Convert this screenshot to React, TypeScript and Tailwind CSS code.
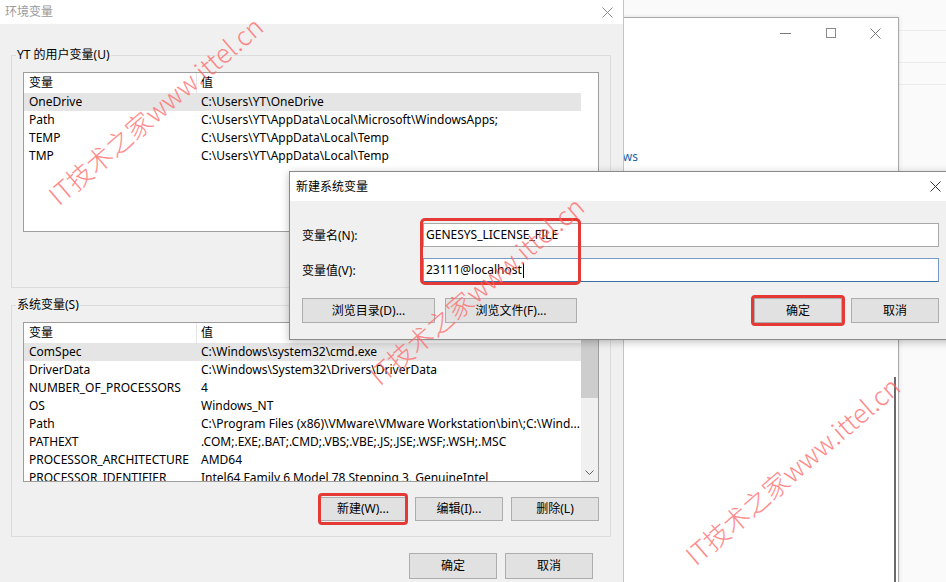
import React from "react";

const XIcon = ({ className = "" }: { className?: string }) => (
  <svg width="11" height="11" viewBox="0 0 11 11" className={className}>
    <path d="M0.5 0.5 L10.5 10.5 M10.5 0.5 L0.5 10.5" stroke="currentColor" strokeWidth="1" fill="none" />
  </svg>
);

const userRows: [string, string][] = [
  ["OneDrive", "C:\\Users\\YT\\OneDrive"],
  ["Path", "C:\\Users\\YT\\AppData\\Local\\Microsoft\\WindowsApps;"],
  ["TEMP", "C:\\Users\\YT\\AppData\\Local\\Temp"],
  ["TMP", "C:\\Users\\YT\\AppData\\Local\\Temp"],
];

const sysRows: [string, string][] = [
  ["ComSpec", "C:\\Windows\\system32\\cmd.exe"],
  ["DriverData", "C:\\Windows\\System32\\Drivers\\DriverData"],
  ["NUMBER_OF_PROCESSORS", "4"],
  ["OS", "Windows_NT"],
  ["Path", "C:\\Program Files (x86)\\VMware\\VMware Workstation\\bin\\;C:\\Wind..."],
  ["PATHEXT", ".COM;.EXE;.BAT;.CMD;.VBS;.VBE;.JS;.JSE;.WSF;.WSH;.MSC"],
  ["PROCESSOR_ARCHITECTURE", "AMD64"],
  ["PROCESSOR_IDENTIFIER", "Intel64 Family 6 Model 78 Stepping 3, GenuineIntel"],
];

function VarList({ rows, scroll }: { rows: [string, string][]; scroll: boolean }) {
  return (
    <div className="h-[160px] border border-[#9e9e9e] bg-white flex overflow-hidden">
      <div className="w-[557px] flex flex-col shrink-0">
        <div className="h-[20px] flex items-center shrink-0">
          <div className="w-[173px] h-full pl-[5px] flex items-center border-r border-[#e5e5e5]">变量</div>
          <div className="pl-[4px]">值</div>
        </div>
        {rows.map((r, i) => (
          <div
            key={i}
            className={i === 0 ? "h-[18px] flex items-center shrink-0 bg-[#e5e5e5]" : "h-[18px] flex items-center shrink-0"}
          >
            <div className="w-[173px] pl-[5px] whitespace-nowrap overflow-hidden">{r[0]}</div>
            <div className="pl-[4px] whitespace-nowrap">{r[1]}</div>
          </div>
        ))}
      </div>
      {scroll ? (
        <div className="w-[17px] flex flex-col bg-[#f0f0f0] shrink-0">
          <div className="h-[17px] flex items-center justify-center text-[#606060]">
            <svg width="9" height="5" viewBox="0 0 9 5">
              <path d="M0.5 4.5 L4.5 0.5 L8.5 4.5" stroke="currentColor" fill="none" />
            </svg>
          </div>
          <div className="h-[58px] bg-[#cdcdcd]" />
          <div className="flex-1" />
          <div className="h-[17px] flex items-center justify-center text-[#606060]">
            <svg width="9" height="5" viewBox="0 0 9 5">
              <path d="M0.5 0.5 L4.5 4.5 L8.5 0.5" stroke="currentColor" fill="none" />
            </svg>
          </div>
        </div>
      ) : null}
    </div>
  );
}

function Btn({ children }: { children: React.ReactNode }) {
  return (
    <div className="w-[88px] h-[24px] bg-[#e1e1e1] border border-[#adadad] flex items-center justify-center">
      {children}
    </div>
  );
}

function Watermark({ pos }: { pos: string }) {
  return (
    <div
      className={
        "absolute -translate-x-1/2 -translate-y-1/2 -rotate-[40.6deg] whitespace-nowrap text-[26px] leading-none text-[#ff6262]/75 font-['Noto_Sans_CJK_SC',sans-serif] font-light pointer-events-none " +
        pos
      }
    >
      IT技术之家www.ittel.cn
    </div>
  );
}

export default function App() {
  return (
    <div className="relative w-[946px] h-[582px] overflow-hidden bg-[#fafafa] text-[12px] text-black font-['Noto_Sans','Noto_Sans_CJK_SC',sans-serif]">
      {/* far background lines */}
      <div className="absolute left-[898px] top-[30px] w-[60px] h-px bg-[#ececec]" />
      <div className="absolute left-[898px] top-[62px] w-[60px] h-px bg-[#ececec]" />
      <div className="absolute left-[898px] top-[84px] w-[60px] h-px bg-[#ececec]" />

      {/* background window */}
      <div className="absolute left-[560px] top-[17px] w-[339px] h-[600px] bg-white border border-[#a8a8a8] shadow-[0_0_4px_rgba(0,0,0,0.12)] flex flex-col">
        <div className="h-[30px] flex justify-end items-center text-[#7a7a7a]">
          <div className="w-[45px] flex justify-center">
            <div className="w-[11px] h-px bg-[#7a7a7a]" />
          </div>
          <div className="w-[45px] flex justify-center">
            <div className="w-[10px] h-[10px] border border-[#8a8a8a]" />
          </div>
          <div className="w-[45px] flex justify-center">
            <XIcon />
          </div>
        </div>
        <div className="pt-[102px] w-[77px] text-right text-[12px] text-[#1a64a8] leading-[14px]">Windows</div>
        <div className="flex justify-end pr-[2px] pt-[213px]">
          <div className="w-[2px] h-[210px] bg-[#6a6a6a]" />
        </div>
      </div>

      {/* main dialog */}
      <div className="absolute left-0 top-0 w-[624px] h-[600px] bg-[#f0f0f0] border-r border-[#c4c4c4] flex flex-col">
        <div className="h-[24px] bg-white flex items-center justify-between pl-[5px] pr-[10px] shrink-0">
          <span className="text-[12px] text-[#9a9a9a]">环境变量</span>
          <XIcon className="text-[#8a8a8a]" />
        </div>
        <div className="pl-[11px] pr-[12px] flex flex-col">
          {/* user group */}
          <div className="relative mt-[31px] border border-[#dcdcdc] pt-[16px] px-[11px] pb-[18px]">
            <span className="absolute -top-[9px] left-[4px] px-[1px] leading-[16px] bg-[#f0f0f0]">YT 的用户变量(U)</span>
            <VarList rows={userRows} scroll={false} />
            <div className="mt-[13px] flex justify-end gap-[8px]">
              <Btn>新建(N)...</Btn>
              <Btn>编辑(E)...</Btn>
              <Btn>删除(D)</Btn>
            </div>
          </div>
          {/* system group */}
          <div className="relative mt-[17px] border border-[#dcdcdc] pt-[16px] px-[11px] pb-[15px]">
            <span className="absolute -top-[9px] left-[4px] px-[1px] leading-[16px] bg-[#f0f0f0]">系统变量(S)</span>
            <VarList rows={sysRows} scroll={true} />
            <div className="mt-[15px] flex justify-end gap-[8px]">
              <div className="relative">
                <Btn>新建(W)...</Btn>
                <span className="absolute -inset-y-[4px] -inset-x-[1px] border-[3px] border-[#e53935] rounded-[4px]" />
              </div>
              <Btn>编辑(I)...</Btn>
              <Btn>删除(L)</Btn>
            </div>
          </div>
          <div className="mt-[16px] pr-[18px] flex justify-end gap-[8px]">
            <div className="w-[88px] h-[26px] bg-[#e1e1e1] border border-[#adadad] flex items-center justify-center">确定</div>
            <div className="w-[88px] h-[26px] bg-[#e1e1e1] border border-[#adadad] flex items-center justify-center">取消</div>
          </div>
        </div>
      </div>

      {/* new system variable dialog */}
      <div className="absolute left-[289px] top-[171px] w-[670px] h-[169px] bg-[#f0f0f0] border border-[#8a8a8a] shadow-[0_2px_8px_rgba(0,0,0,0.25)] flex flex-col">
        <div className="h-[29px] bg-white flex items-center justify-between pl-[6px] shrink-0">
          <span>新建系统变量</span>
          <div className="w-[46px] flex justify-center text-[#333]">
            <XIcon />
          </div>
        </div>
        <div className="relative flex flex-col pl-[12px] pt-[22px]">
          <div className="flex items-center h-[24px]">
            <div className="w-[121px] pt-[2px]">变量名(N):</div>
            <div className="w-[516px] h-[24px] bg-white border border-[#a8a8a8] flex items-center pl-[2px] whitespace-nowrap">
              GENESYS_LICENSE_FILE
            </div>
          </div>
          <div className="flex items-center h-[24px] mt-[11px]">
            <div className="w-[121px] pt-[2px]">变量值(V):</div>
            <div className="w-[516px] h-[24px] bg-white border border-[#7a9cc0] border-b-[#3a6ea5] flex items-center pl-[2px] whitespace-nowrap">
              23111@localhost<span className="inline-block w-px h-[15px] bg-black ml-px" />
            </div>
          </div>
          <span className="absolute left-[130px] top-[17px] w-[161px] h-[67px] border-[3px] border-[#e53935] rounded-[5px]" />
          <div className="flex items-center mt-[16px]">
            <div className="w-[133px] h-[25px] bg-[#e1e1e1] border border-[#adadad] flex items-center justify-center">浏览目录(D)...</div>
            <div className="ml-[10px] w-[132px] h-[25px] bg-[#e1e1e1] border border-[#adadad] flex items-center justify-center">浏览文件(F)...</div>
            <div className="relative ml-[177px]">
              <div className="w-[88px] h-[25px] bg-[#e1e1e1] border border-[#adadad] flex items-center justify-center">确定</div>
              <span className="absolute -inset-[3px] border-[3px] border-[#e53935] rounded-[4px]" />
            </div>
            <div className="ml-[9px] w-[88px] h-[25px] bg-[#e1e1e1] border border-[#adadad] flex items-center justify-center">取消</div>
          </div>
        </div>
      </div>

      <Watermark pos="left-[155px] top-[110px]" />
      <Watermark pos="left-[476px] top-[290px]" />
      <Watermark pos="left-[792px] top-[470px]" />
    </div>
  );
}
